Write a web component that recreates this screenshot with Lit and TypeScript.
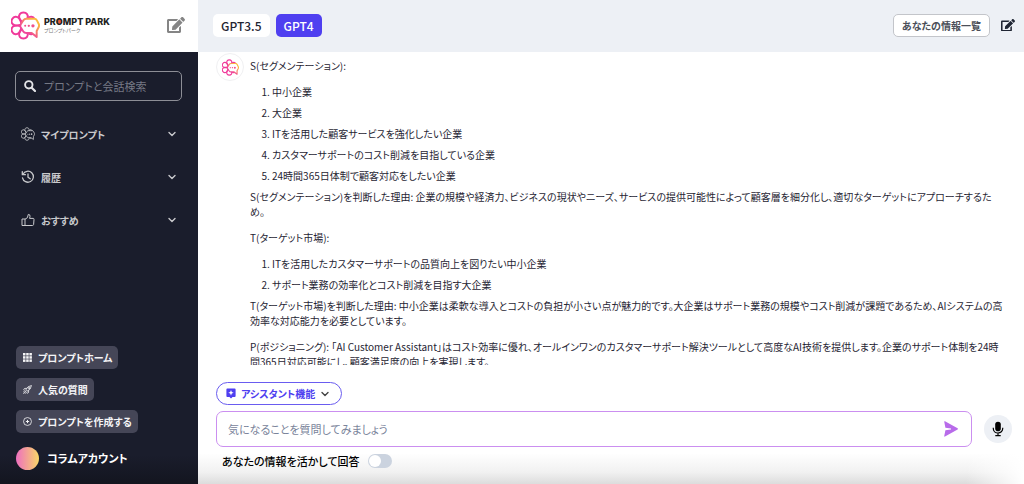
import { LitElement, html, css, svg, nothing } from "lit";
import { customElement, property, state } from "lit/decorators.js";

const chevron = html`<svg class="chevron" viewBox="0 0 10 10" width="10" height="10" aria-hidden="true">
  <path d="M2 3.600 5 6.600 8 3.600" fill="none" stroke="currentColor" stroke-width="1.400" stroke-linecap="round" stroke-linejoin="round" />
</svg>`;

const editIcon = html`<svg viewBox="0 0 576 512" width="100%" aria-hidden="true">
  <path fill="currentColor" d="M402.6 83.2l90.2 90.2c3.8 3.8 3.8 10 0 13.8L274.4 405.6l-92.8 10.3c-12.4 1.4-22.9-9.1-21.5-21.5l10.3-92.8L388.8 83.2c3.8-3.8 10-3.8 13.800 0zm162-22.900l-48.800-48.800c-15.200-15.200-39.900-15.200-55.200 0l-35.400 35.400c-3.800 3.800-3.800 10 0 13.800l90.200 90.200c3.800 3.800 10 3.800 13.800 0l35.400-35.400c15.200-15.300 15.200-40 0-55.200zM384 346.200V448H64V128h229.800c3.200 0 6.200-1.300 8.500-3.500l40-40c7.600-7.600 2.200-20.500-8.500-20.500H48C21.500 64 0 85.500 0 112v352c0 26.500 21.500 48 48 48h352c26.500 0 48-21.500 48-48V306.200c0-10.700-12.900-16-20.500-8.500l-40 40c-2.200 2.300-3.500 5.300-3.500 8.500z" />
</svg>`;

@customElement("park-mark")
export class ParkMark extends LitElement {
  @property({ type: Boolean }) mono = false;

  static styles = css`
    :host { display: block; flex: none; }
    .mark { display: block; width: 100%; }
    .petal { fill: none; stroke: #f0399a; }
    .bubble { fill: #fff; stroke: url(#warm); }
    .petal, .bubble { stroke-width: 1.9; stroke-linejoin: round; }
    .dots { fill: #f0508c; }
    .mono .petal, .mono .bubble { stroke: currentColor; stroke-width: 1.6; }
    .mono .bubble { fill: #1a1d2c; }
    .mono .dots { fill: currentColor; }
  `;

  render() {
    return html`<svg class="mark ${this.mono ? "mono" : ""}" viewBox="0 0 28 28" aria-hidden="true">
      <defs>
        <linearGradient id="warm" gradientUnits="userSpaceOnUse" x1="10" y1="24" x2="24" y2="8">
          <stop offset="0.3" stop-color="#f0479a" />
          <stop offset="0.9" stop-color="#fbb93c" />
        </linearGradient>
      </defs>
      ${[0, 60, 120].map(
        (a) => svg`<path class="petal" transform="rotate(${a} 12 14)" d="M12 1.500C15.200 1.500 16.800 4 16 6.600 15.200 9.200 13.800 10.500 13.800 14S15.200 18.800 16 21.400C16.800 24 15.200 26.500 12 26.500S7.200 24 8 21.400C8.800 18.800 10.200 17.500 10.200 14S8.800 9.200 8 6.600C7.200 4 8.800 1.500 12 1.500Z" />`
      )}
      <path class="bubble" d="M14.800 7.400H22.300Q24.200 7.400 25 9L26.800 12.600Q27.400 14 26.800 15.500L24.800 19.300V25L20 21.300H14.800Q12.800 21.300 11.900 19.700L9.300 15.600Q8.600 14.300 9.300 13L12 8.900Q13 7.400 14.800 7.400Z" />
      <g class="dots"><circle cx="13.700" cy="14.300" r="1" /><circle cx="17.200" cy="14.300" r="1.100" /><circle cx="21.200" cy="14.300" r="1.600" /></g>
    </svg>`;
  }
}

@customElement("side-panel")
export class SidePanel extends LitElement {
  static styles = css`
    :host { display: flex; flex-direction: column; background: linear-gradient(transparent 94%, #13151f), #1a1d2c; color: #d6d7da; min-height: 0; }
    svg { display: block; flex: none; }
    button, input { font: inherit; color: inherit; border: 0; background: none; margin: 0; padding: 0; }
    .brand { display: flex; align-items: center; height: 52px; padding: 0 13px 2px 11px; background: #fff; box-sizing: border-box; }
    .mark { width: 29px; }
    .names { flex: 1; margin-left: 4px; color: #222; white-space: nowrap; }
    .name { display: block; font: 800 9px/10px Inter, sans-serif; }
    .dot { background: radial-gradient(circle at 50% 50%, #f0603c 0 2px, transparent 3px); }
    .kana { display: block; font-size: 5px; line-height: 6px; color: #777; }
    .new { width: 18px; color: #858585; }
    .search { display: flex; align-items: center; gap: 8px; height: 30px; box-sizing: border-box; margin: 19px 16px 0 15px; padding: 0 8px; border: 1px solid #8d8e96; border-radius: 5px; }
    .search input { flex: 1; min-width: 0; outline: 0; font-size: 11px; }
    .search input::placeholder { color: #767985; opacity: 1; }
    .menu { display: flex; flex-direction: column; gap: 23px; margin: 23px 21px 0 21px; padding: 0; list-style: none; }
    .row { display: flex; align-items: center; gap: 6px; width: 100%; height: 20px; font-weight: 700; text-align: left; color: #c9cacd; }
    .row span { flex: 1; }
    .glyph { width: 14px; flex: none; }
    .foot { display: flex; flex-direction: column; align-items: flex-start; gap: 9px; margin-top: auto; padding: 0 16px 14px; }
    .chip { display: flex; align-items: center; gap: 6px; height: 23px; padding: 0 6px 0 7px; border-radius: 5px; background: #454657; color: #f4f4f6; font-weight: 700; }
    .account { display: flex; align-items: center; gap: 8px; margin-top: 5px; font-size: 11px; line-height: 23px; font-weight: 700; color: #fff; }
    .face { width: 23px; height: 23px; border-radius: 50%; background: linear-gradient(90deg, #ee6fc0, #f9d768); }
  `;

  private history = html`<svg viewBox="0 0 14 14" width="14" height="14" aria-hidden="true">
    <path d="M2 4.200A5.500 5.500 0 1 1 1.500 7.800M1.300 1.600V4.700H4.400M7 4V7.200L9.200 8.800" fill="none" stroke="currentColor" stroke-width="1.300" stroke-linecap="round" stroke-linejoin="round" />
  </svg>`;
  private thumb = html`<svg viewBox="0 0 14 14" width="14" height="14" aria-hidden="true">
    <path d="M1 6H4V12.500H1ZM4 6.200 6.400 4.700 7.300 1.400Q9.300 1.200 9 3.600L8.600 5.400H12.200Q13.200 5.500 13 6.600L12.600 11.500Q12.400 12.500 11.400 12.500H4" fill="none" stroke="currentColor" stroke-width="1" stroke-linejoin="round" />
  </svg>`;
  private grid = html`<svg viewBox="0 0 9 9" width="9" height="9" fill="currentColor" aria-hidden="true">
    ${[0, 1, 2].map((r) => [0, 1, 2].map((c) => svg`<rect x=${c * 3.2} y=${r * 3.2} width="2.500" height="2.500" />`))}
  </svg>`;
  private rocket = html`<svg viewBox="0 0 10 10" width="9" height="9" fill="none" stroke="currentColor" stroke-width="0.900" stroke-linecap="round" stroke-linejoin="round" aria-hidden="true">
    <path d="M3.200 5.200Q5 .9 9.400 .6 9.100 5 4.800 6.800ZM3.800 3.700 1.600 3.900 .8 5.300M6.300 6.200 6.100 8.400 4.700 9.200M.6 7.600 2 6.300M.7 9.400 3.200 6.900M2.500 9.400 3.800 8.100" /><circle cx="6.600" cy="3.400" r=".6" />
  </svg>`;
  private plus = html`<svg viewBox="0 0 10 10" width="9" height="9" fill="none" stroke="currentColor" stroke-width="0.900" aria-hidden="true">
    <circle cx="5" cy="5" r="4.400" /><path d="M5 3.200V6.800M3.200 5H6.800" stroke-width="1.100" />
  </svg>`;

  render() {
    const rows = [
      { label: "マイプロンプト", icon: html`<park-mark mono></park-mark>` },
      { label: "履歴", icon: this.history },
      { label: "おすすめ", icon: this.thumb },
    ];
    const chips = [
      { label: "プロンプトホーム", icon: this.grid },
      { label: "人気の質問", icon: this.rocket },
      { label: "プロンプトを作成する", icon: this.plus },
    ];
    return html`
      <div class="brand">
        <park-mark class="mark"></park-mark>
        <div class="names"><span class="name">PR<span class="dot">O</span>MPT PARK</span><span class="kana">プロンプトパーク</span></div>
        <button class="new" aria-label="新規作成">${editIcon}</button>
      </div>
      <label class="search">
        <svg viewBox="0 0 12 12" width="12" height="12" aria-hidden="true"><circle cx="4.800" cy="4.800" r="3.700" fill="none" stroke="#e4e4e8" stroke-width="1.900" /><path d="M7.700 7.700 11 11" stroke="#e4e4e8" stroke-width="2.200" stroke-linecap="round" /></svg>
        <input type="search" aria-label="検索" placeholder="プロンプトと会話検索" />
      </label>
      <ul class="menu">
        ${rows.map((r) => html`<li><button class="row"><div class="glyph">${r.icon}</div><span>${r.label}</span>${chevron}</button></li>`)}
      </ul>
      <div class="foot">
        ${chips.map((c) => html`<button class="chip">${c.icon}${c.label}</button>`)}
        <div class="account"><div class="face"></div>コラムアカウント</div>
      </div>
    `;
  }
}

type Block = { text?: string; items?: string[] };

const answer: Block[] = [
  { text: "S(セグメンテーション):" },
  { items: ["中小企業", "大企業", "ITを活用した顧客サービスを強化したい企業", "カスタマーサポートのコスト削減を目指している企業", "24時間365日体制で顧客対応をしたい企業"] },
  { text: "S(セグメンテーション)を判断した理由: 企業の規模や経済力、ビジネスの現状やニーズ、サービスの提供可能性によって顧客層を細分化し、適切なターゲットにアプローチするため。" },
  { text: "T(ターゲット市場):" },
  { items: ["ITを活用したカスタマーサポートの品質向上を図りたい中小企業", "サポート業務の効率化とコスト削減を目指す大企業"] },
  { text: "T(ターゲット市場)を判断した理由: 中小企業は柔軟な導入とコストの負担が小さい点が魅力的です。大企業はサポート業務の規模やコスト削減が課題であるため、AIシステムの高効率な対応能力を必要としています。" },
  { text: "P(ポジショニング): 「AI Customer Assistant」はコスト効率に優れ、オールインワンのカスタマーサポート解決ツールとして高度なAI技術を提供します。企業のサポート体制を24時間365日対応可能にし、顧客満足度の向上を実現します。" },
];

@customElement("chat-panel")
export class ChatPanel extends LitElement {
  @state() private model = "GPT4";

  static styles = css`
    :host { display: flex; flex-direction: column; min-width: 0; min-height: 0; background: #fff; color: #1f2533; }
    svg { display: block; flex: none; }
    button, input { font: inherit; color: inherit; border: 0; background: none; margin: 0; padding: 0; box-sizing: border-box; }
    .bar { display: flex; align-items: center; gap: 6px; height: 52px; flex: none; box-sizing: border-box; padding: 0 9px 2px 15px; background: #edf0f5; }
    .model { height: 23px; padding: 0 8px; border-radius: 5px; background: #fff; font-size: 12px; line-height: 23px; font-weight: 500; }
    .on { background: #4f3ff0; color: #fff; }
    .info { height: 23px; margin-left: auto; padding: 0 8px; border: 1px solid #c3c5ca; border-radius: 5px; background: #fff; color: #4b4f59; font-weight: 700; }
    .edit { width: 14px; margin-left: 5px; }
    .thread { flex: 1; min-height: 0; overflow: hidden; display: flex; align-items: flex-start; gap: 6px; padding: 1px 18px 0 18px; }
    .avatar { display: grid; place-items: center; flex: none; width: 28px; height: 28px; box-sizing: border-box; border: 1px solid #f0f0f2; border-radius: 50%; }
    .avatar park-mark { width: 17px; }
    .answer { flex: 1; min-width: 0; padding-top: 5px; line-height: 15px; }
    .answer p { margin: 0 0 11px; }
    .answer ol { display: flex; flex-direction: column; gap: 6px; margin: 0 0 6px; padding-left: 22px; }
    .answer li { padding: 0; }
    .composer { flex: none; display: flex; flex-direction: column; align-items: flex-start; padding: 17px 12px 16px 18px;
      background: linear-gradient(90deg, transparent 93%, #fff 100%), linear-gradient(transparent 74%, #f1f1f1 90%, #dcdcdc 100%); }
    .assist { display: flex; align-items: center; height: 23px; padding: 0 11px 0 9px; border: 1px solid #6a5cf0; border-radius: 12px; background: #fff; color: #4f3ff0; font-weight: 700; gap: 5px; }
    .assist .chevron { color: #444; }
    .line { display: flex; align-items: center; gap: 12px; width: 100%; margin: 6px 0 7px; }
    .box { flex: 1; display: flex; align-items: center; height: 36px; box-sizing: border-box; padding: 0 12px 0 11px; border: 1px solid #cb8ff0; border-radius: 7px; background: #fff; }
    .box input { flex: 1; min-width: 0; outline: 0; font-size: 11px; }
    .box input::placeholder { color: #79839a; opacity: 1; }
    .mic { display: grid; place-items: center; width: 28px; height: 28px; border-radius: 50%; background: #edf0f5; color: #000; }
    .use { display: flex; align-items: center; gap: 9px; padding-left: 6px; font-size: 11px; line-height: 14px; font-weight: 500; color: #000; }
    .switch { appearance: none; display: flex; width: 24px; height: 14px; padding: 1px; border-radius: 7px; background: #cbd3df; }
    .switch::before { content: ""; width: 12px; height: 12px; border-radius: 50%; background: #fff; }
    .switch:checked { background: #4f3ff0; justify-content: flex-end; }
  `;

  render() {
    return html`
      <header class="bar">
        ${["GPT3.5", "GPT4"].map(
          (m) => html`<button class="model ${m === this.model ? "on" : ""}" @click=${() => (this.model = m)}>${m}</button>`
        )}
        <button class="info">あなたの情報一覧</button>
        <button class="edit" aria-label="編集">${editIcon}</button>
      </header>
      <section class="thread">
        <div class="avatar"><park-mark></park-mark></div>
        <div class="answer">
          ${answer.map((b) => [
            b.text ? html`<p>${b.text}</p>` : nothing,
            b.items ? html`<ol>${b.items.map((i) => html`<li>${i}</li>`)}</ol>` : nothing,
          ])}
        </div>
      </section>
      <footer class="composer">
        <button class="assist">
          <svg viewBox="0 0 10 11" width="10" height="11" aria-hidden="true"><path fill="currentColor" d="M1.300 .5H8.700Q9.600 .5 9.600 1.400V8Q9.600 8.900 8.700 8.900H6.500L5 10.500 3.500 8.900H1.300Q.4 8.900 .4 8V1.400Q.4 .5 1.300 .5Z" /><path fill="#fff" d="M5 2 5.800 3.900 7.700 4.700 5.800 5.500 5 7.400 4.200 5.500 2.300 4.700 4.200 3.900Z" /></svg>
          アシスタント機能${chevron}
        </button>
        <div class="line">
          <div class="box">
            <input type="text" aria-label="質問" placeholder="気になることを質問してみましょう" />
            <button aria-label="送信"><svg viewBox="0 0 16 16" width="16" height="16" aria-hidden="true"><path fill="#b86bea" d="M1.200 .6Q1.300 -.1 2 .3L14.600 7.300Q15.300 7.900 14.600 8.500L2 15.600Q1.300 15.900 1.200 15.200L2.400 9.200 8 8.500V7.400L2.400 6.700Z" /></svg></button>
          </div>
          <button class="mic" aria-label="音声入力"><svg viewBox="0 0 12 16" width="12" height="16" aria-hidden="true"><rect x="3.200" y=".8" width="5.600" height="9.400" rx="2.800" fill="currentColor" /><path d="M1.300 6.800V7.800A4.700 4.200 0 0 0 10.700 7.800V6.800M6 12V14.500M3.300 14.700H8.700" fill="none" stroke="currentColor" stroke-width="1.200" /></svg></button>
        </div>
        <label class="use">あなたの情報を活かして回答<input class="switch" type="checkbox" role="switch" /></label>
      </footer>
    `;
  }
}

@customElement("app-root")
export class AppRoot extends LitElement {
  static styles = css`
    :host {
      display: grid;
      grid-template-columns: 198px minmax(0, 1fr);
      grid-template-rows: minmax(0, 1fr);
      height: 100vh;
      font: 10px/15px "Noto Sans CJK JP", sans-serif;
      font-feature-settings: "palt" 1;
    }
  `;

  render() {
    return html`<side-panel></side-panel><chat-panel></chat-panel>`;
  }
}
